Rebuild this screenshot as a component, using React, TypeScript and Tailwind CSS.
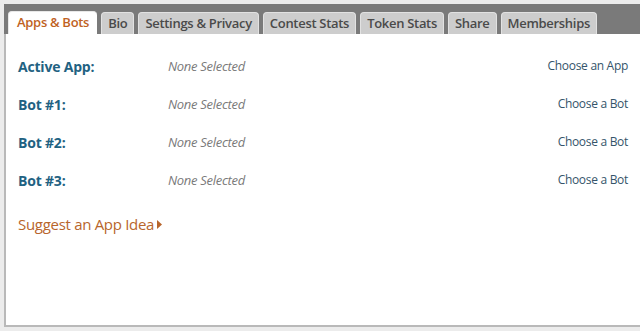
const tabs = ['Apps & Bots', 'Bio', 'Settings & Privacy', 'Contest Stats', 'Token Stats', 'Share', 'Memberships'];

const rows = [
    { label: 'Active App:', action: 'Choose an App' },
    { label: 'Bot #1:', action: 'Choose a Bot' },
    { label: 'Bot #2:', action: 'Choose a Bot' },
    { label: 'Bot #3:', action: 'Choose a Bot' }
];

const App = () => {
    return (
        <div className="w-[640px] h-[331px] bg-[#ececec] pt-[4px] pl-[4px] pb-[4px] flex flex-col" style={{ fontFamily: '"Open Sans", "Liberation Sans", sans-serif' }}>
            {/* Tab bar */}
            <div className="h-[30px] bg-[#7a7a7a] flex items-end gap-[4px] pl-[4px] shrink-0">
                {tabs.map((tab, i) =>
                    i === 0 ? (
                        <div key={tab} className="h-[23px] px-[8px] bg-white rounded-t-[4px] border-l border-t border-[#e8e8e8] flex items-center text-[13px] font-semibold text-[#c0621f] tracking-[-0.3px]">
                            {tab}
                        </div>
                    ) : (
                        <div key={tab} className="h-[22px] px-[6px] bg-[#cdcdcd] rounded-t-[4px] border-l border-t border-r border-[#e2e2e2] flex items-center text-[13px] font-semibold text-[#4a4a4a] tracking-[-0.3px]">
                            {tab}
                        </div>
                    )
                )}
            </div>

            {/* Panel */}
            <div className="flex-1 bg-white border-l-2 border-b-2 border-[#b9b9b9] pl-[12px] pr-[12px] pt-[23px]">
                <div className="flex flex-col">
                    {rows.map((row) => (
                        <div key={row.label} className="h-[38px] flex items-start">
                            <div className="w-[150px] text-[14px] font-bold text-[#1f6282] tracking-[-0.2px] leading-[20px]">{row.label}</div>
                            <div className="flex-1 text-[13px] italic text-[#7a7a7a] leading-[18px] tracking-[-0.3px]">None Selected</div>
                            <div className="text-[12px] text-[#34546a] leading-[18px] tracking-[-0.3px]">{row.action}</div>
                        </div>
                    ))}
                </div>
                <div className="mt-[4px] flex items-center text-[15px] text-[#b8652c] tracking-[-0.3px]">
                    Suggest an App Idea
                    <svg width="6" height="9" viewBox="0 0 6 9" className="ml-[3px]">
                        <path d="M0 0 L5 4.5 L0 9 Z" fill="#b8652c" />
                    </svg>
                </div>
            </div>
        </div>
    );
};

export default App;
